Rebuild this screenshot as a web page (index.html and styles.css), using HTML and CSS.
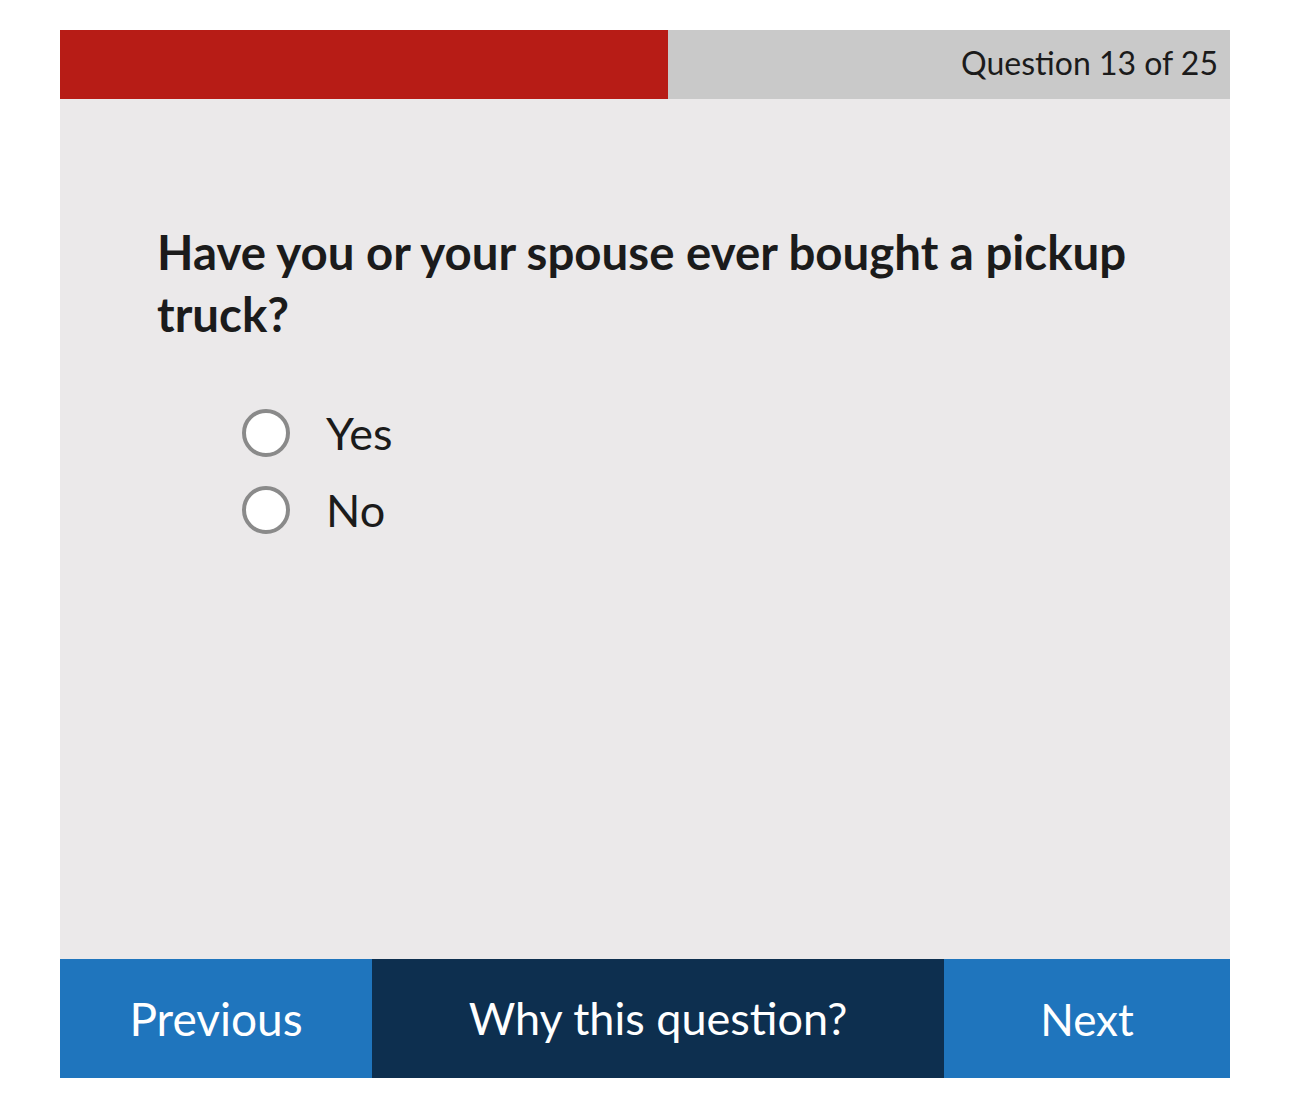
FILE: index.html
```html
<!DOCTYPE html>
<html lang="en">
<head>
<meta charset="utf-8">
<title>Question 13 of 25</title>
<link rel="stylesheet" href="styles.css">
</head>
<body>
<div class="app">
  <div class="progress">
    <div class="progress-fill" style="width: 52%"></div>
    <div class="progress-label">Question 13 of 25</div>
  </div>
  <main class="question">
    <h1 class="question-title">Have you or your spouse ever bought a pickup truck?</h1>
    <div class="options">
      <label class="option"><span class="radio"></span><span class="option-text">Yes</span></label>
      <label class="option"><span class="radio"></span><span class="option-text">No</span></label>
    </div>
  </main>
  <nav class="footer">
    <button class="btn btn-prev">Previous</button>
    <button class="btn btn-why">Why this question?</button>
    <button class="btn btn-next">Next</button>
  </nav>
</div>
</body>
</html>
```
FILE: styles.css
```css
* { box-sizing: border-box; }
html, body { margin: 0; padding: 0; background: #ffffff; }
body { font-family: Lato, "Open Sans", sans-serif; color: #1b1b1b; }
.app { width: 1170px; margin: 30px 60px; }
.progress { display: flex; height: 69px; background: #c9c9c9; }
.progress-fill { background: #b71c16; height: 100%; }
.progress-label { flex: 1; text-align: right; padding-right: 12px; font-size: 32px; line-height: 66px; color: #1b1b1b; }
.question { background: #ebe9ea; height: 860px; padding: 122px 97px 0; }
.question-title { margin: 0; font-size: 47.4px; font-weight: 700; line-height: 62px; }
.options { display: flex; flex-direction: column; gap: 29px; margin-top: 64px; padding-left: 85px; }
.option { display: flex; align-items: center; gap: 36px; height: 48px; }
.radio { width: 48px; height: 48px; border-radius: 50%; border: 4px solid #8a8a8a; background: #ffffff; flex: none; }
.option-text { font-size: 45px; }
.footer { display: flex; height: 119px; }
.btn { border: 0; margin: 0; padding: 0; font-family: inherit; color: #ffffff; font-size: 46px; line-height: 1; cursor: pointer; }
.btn-prev { width: 312px; background: #1f75bd; }
.btn-why { width: 572px; background: #0d2f4f; font-size: 45px; }
.btn-next { width: 286px; background: #1f75bd; font-size: 44px; }
```
